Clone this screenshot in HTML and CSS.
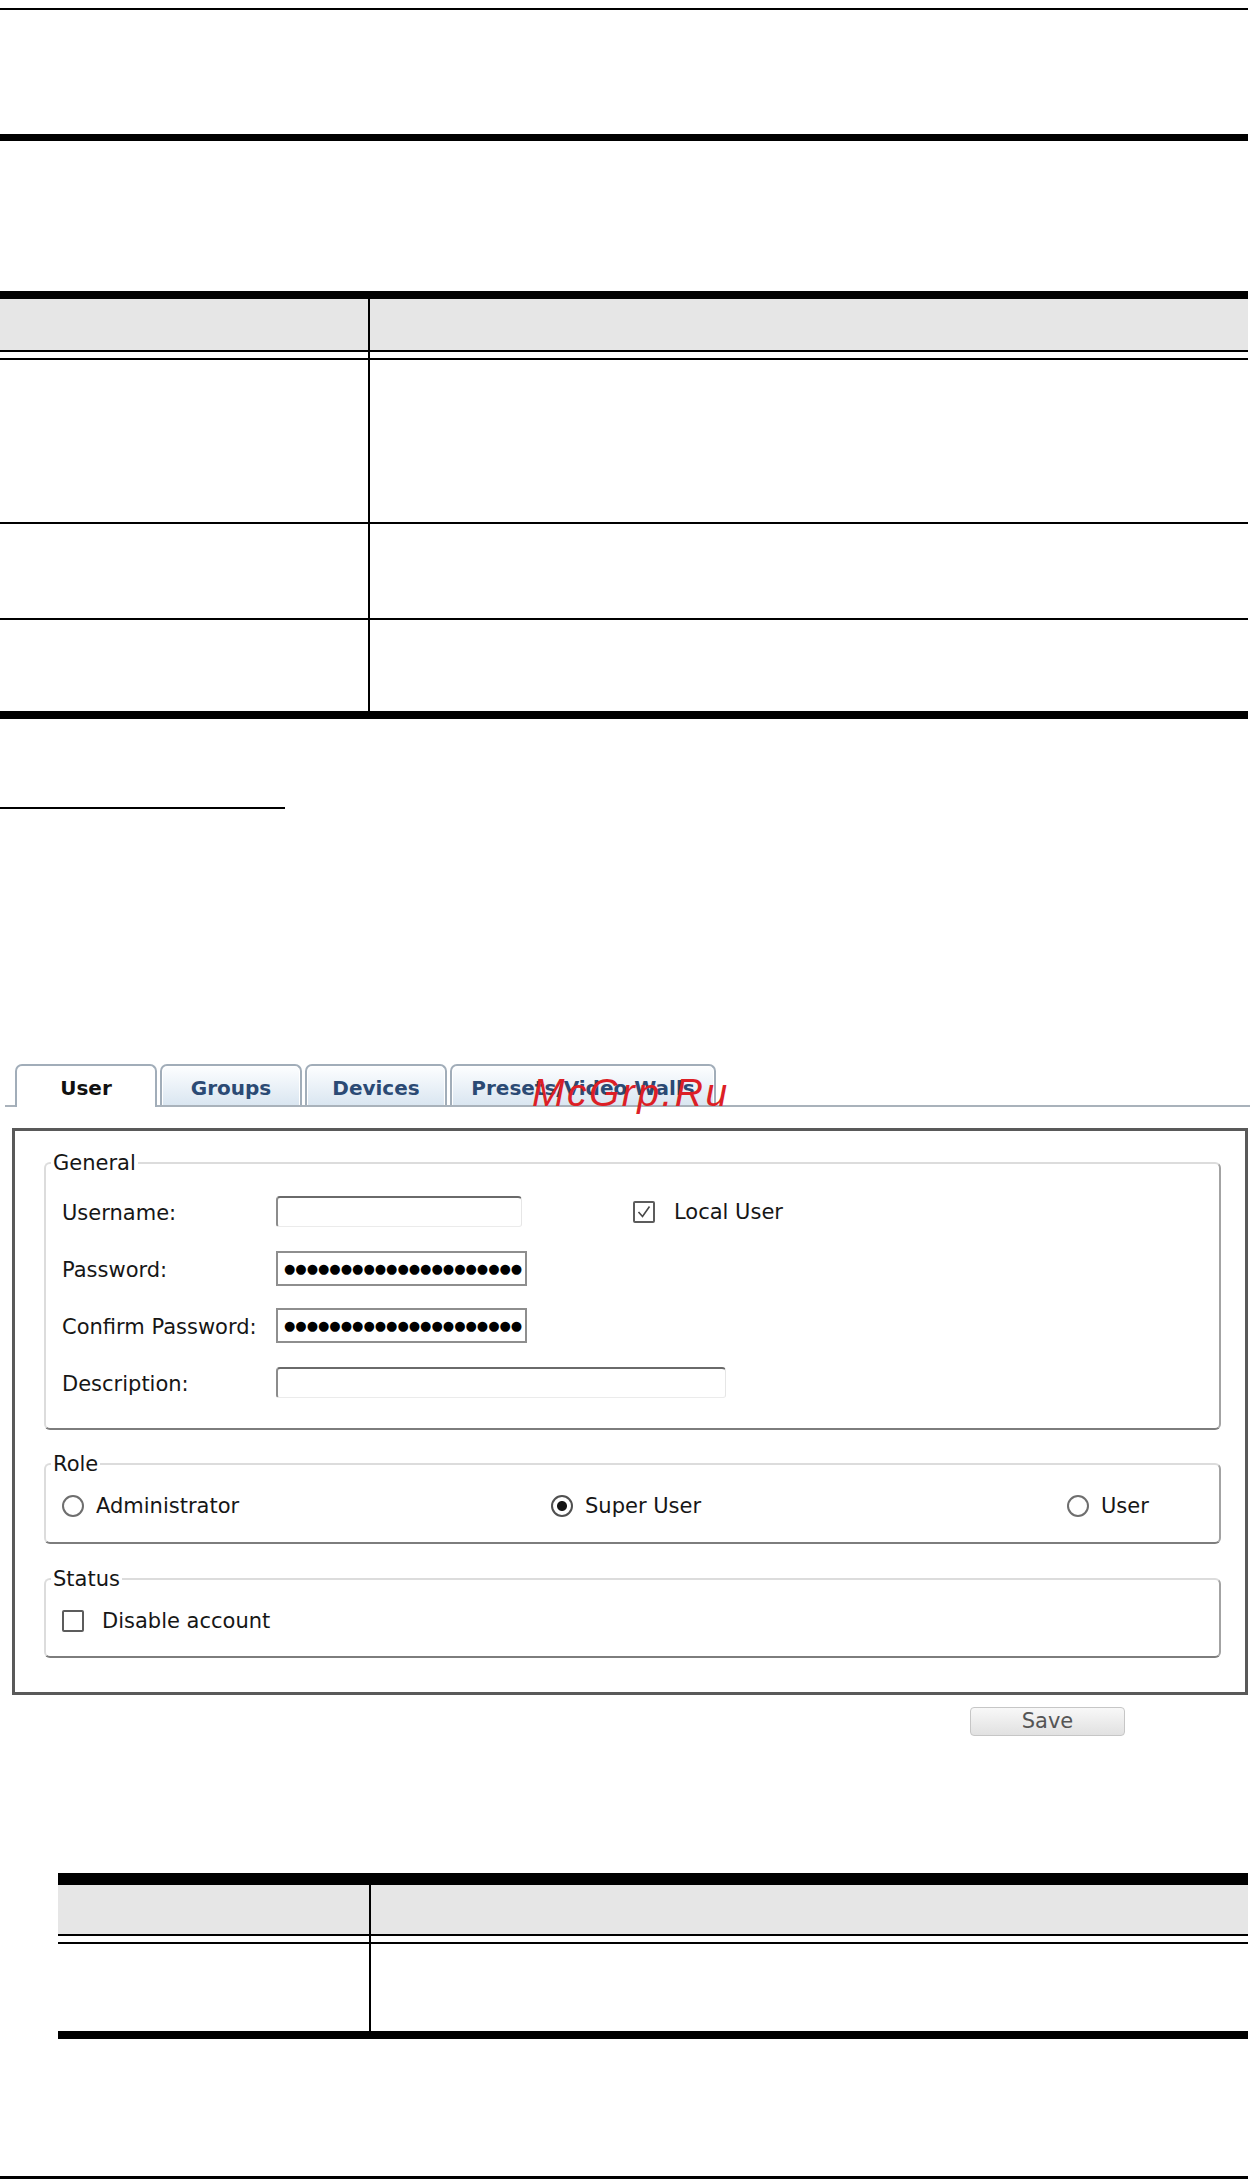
FILE: index.html
```html
<!DOCTYPE html>
<html lang="en">
<head>
  <meta charset="UTF-8">
  <title>User Accounts</title>
  <link rel="stylesheet" href="styles.css">
</head>
<body>
  <div class="page">
    <div class="rule-top"></div>
    <div class="rule-chapter"></div>

    <div class="spec spec-main">
      <div class="spec-row spec-head"><div></div><div></div></div>
      <div class="spec-row spec-split"><div></div><div></div></div>
      <div class="spec-row row-tall spec-line"><div></div><div></div></div>
      <div class="spec-row row-mid spec-line"><div></div><div></div></div>
      <div class="spec-row row-low"><div></div><div></div></div>
    </div>

    <div class="section-rule"></div>

    <div class="console">
      <div class="tabbar">
        <div class="tab active">User</div>
        <div class="tab">Groups</div>
        <div class="tab">Devices</div>
        <div class="tab tab-wide">Presets/Video Walls</div>
        <span class="watermark">McGrp.Ru</span>
      </div>

      <div class="panel">
        <fieldset class="group group-general">
          <legend>General</legend>
          <div class="fields">
            <label class="field-label">Username:</label>
            <div class="input-plain"></div>
            <label class="check-item local-user">
              <span class="check">
                <svg width="18" height="18" viewBox="0 0 18 18"><path d="M3.5 9 L7.5 13.5 L14.5 3.5" fill="none" stroke="#474747" stroke-width="1.6"/></svg>
              </span>
              <span>Local User</span>
            </label>

            <label class="field-label">Password:</label>
            <div class="input-pass"><span class="dots">●●●●●●●●●●●●●●●●●●●●●</span></div>
            <div></div>

            <label class="field-label">Confirm Password:</label>
            <div class="input-pass"><span class="dots">●●●●●●●●●●●●●●●●●●●●●</span></div>
            <div></div>

            <label class="field-label">Description:</label>
            <div class="input-plain input-wide"></div>
          </div>
        </fieldset>

        <fieldset class="group group-role">
          <legend>Role</legend>
          <div class="roles">
            <label class="radio-item"><span class="radio"></span><span>Administrator</span></label>
            <label class="radio-item"><span class="radio on"></span><span>Super User</span></label>
            <label class="radio-item"><span class="radio"></span><span>User</span></label>
          </div>
        </fieldset>

        <fieldset class="group group-status">
          <legend>Status</legend>
          <label class="check-item">
            <span class="check"></span>
            <span>Disable account</span>
          </label>
        </fieldset>
      </div>

      <div class="actions">
        <button class="save-button">Save</button>
      </div>
    </div>

    <div class="spec spec-small">
      <div class="spec-row spec-head"><div></div><div></div></div>
      <div class="spec-row spec-split"><div></div><div></div></div>
      <div class="spec-row row-single"><div></div><div></div></div>
    </div>

    <div class="rule-bottom"></div>
  </div>
</body>
</html>
```

FILE: styles.css
```css
:root {
  --ink: #161616;
  --head-bg: #e6e6e6;
  --tab-border: #a1adb9;
  --tab-text: #2b4a74;
}

body {
  margin: 0;
  background: #fff;
  font-family: "DejaVu Sans", sans-serif;
  color: var(--ink);
}

.page {
  width: 1248px;
}

.rule-top {
  margin-top: 8px;
  height: 2px;
  background: #000;
}

.rule-chapter {
  margin-top: 124px;
  height: 7px;
  background: #000;
}

/* spec tables (text blanked in the source) */
.spec {
  border-top: 8px solid #000;
  border-bottom: 8px solid #000;
}

.spec-main {
  margin-top: 150px;
}

.spec-row {
  display: grid;
  grid-template-columns: 370px 1fr;
}

.spec-row > div:first-child {
  border-right: 2px solid #000;
}

.spec-head {
  height: 51px;
  background: var(--head-bg);
  border-bottom: 2px solid #000;
}

.spec-split {
  height: 6px;
  border-bottom: 2px solid #000;
}

.spec-line {
  border-bottom: 2px solid #000;
}

.row-tall { height: 162px; }
.row-mid { height: 94px; }
.row-low { height: 91px; }
.row-single { height: 87px; }

.spec-small {
  margin-top: 137px;
  margin-left: 58px;
  border-top-width: 12px;
}

.spec-small .spec-row {
  grid-template-columns: 313px 1fr;
}

.spec-small .spec-head {
  height: 49px;
}

.section-rule {
  margin-top: 88px;
  width: 285px;
  height: 2px;
  background: #000;
}

.rule-bottom {
  margin-top: 137px;
  height: 3px;
  background: #000;
}

/* embedded screenshot */
.console {
  margin-top: 255px;
  margin-left: 5px;
  width: 1245px;
}

.tabbar {
  position: relative;
  display: flex;
  align-items: flex-end;
  gap: 3px;
  height: 41px;
  padding-left: 10px;
  border-bottom: 2px solid #a9b2bb;
}

.tab {
  box-sizing: border-box;
  width: 142px;
  height: 41px;
  padding-top: 4px;
  display: flex;
  align-items: center;
  justify-content: center;
  border: 2px solid var(--tab-border);
  border-bottom: none;
  border-radius: 7px 7px 0 0;
  background: linear-gradient(#fdfeff, #dae6f1);
  box-shadow: inset 1px 1px 0 #fff, inset -1px 0 0 #fff;
  color: var(--tab-text);
  font-size: 20px;
  font-weight: bold;
  white-space: nowrap;
}

.tab.active {
  height: 43px;
  margin-bottom: -2px;
  padding-bottom: 2px;
  background: #fff;
  color: #111;
}

.tab-wide {
  width: 266px;
}

.watermark {
  position: absolute;
  left: 527px;
  top: 9px;
  font-family: "Liberation Sans", Arial, sans-serif;
  font-style: italic;
  font-size: 39px;
  line-height: 39px;
  letter-spacing: 2.5px;
  color: #dc1f26;
}

.panel {
  box-sizing: border-box;
  width: 1236px;
  margin: 21px 0 0 7px;
  padding: 20px 24px 34px 29px;
  border: 3px solid #595959;
}

.group {
  margin: 0;
  min-width: 0;
  padding: 0 0 0 16px;
  border: 2px solid #dcdcdc;
  border-right-color: #a3a3a3;
  border-bottom-color: #7d7d7d;
  border-radius: 6px;
}

.group legend {
  margin-left: -11px;
  padding: 0 2px;
  font-size: 21px;
  line-height: 24px;
}

.group-general {
  padding-top: 19px;
  padding-bottom: 28px;
}

.group-role {
  margin-top: 22px;
  padding-top: 18px;
  padding-bottom: 24px;
}

.group-status {
  margin-top: 23px;
  padding-top: 18px;
  padding-bottom: 23px;
}

.fields {
  display: grid;
  grid-template-columns: 214px 357px 1fr;
  grid-auto-rows: 35px;
  row-gap: 22px;
  align-items: center;
  font-size: 21px;
}

.field-label {
  padding-top: 3px;
  white-space: nowrap;
}

.input-plain {
  box-sizing: border-box;
  width: 246px;
  height: 31px;
  border-top: 2px solid #6a6a6a;
  border-left: 2px solid #8c8c8c;
  border-right: 1px solid #e6e6e6;
  border-bottom: 1px solid #ebebeb;
  border-radius: 4px 4px 3px 3px;
  background: #fff;
}

.input-wide {
  grid-column: 2 / span 2;
  width: 450px;
}

.input-pass {
  box-sizing: border-box;
  width: 251px;
  height: 35px;
  border: 2px solid #8e8e8e;
  padding-left: 6px;
  display: flex;
  align-items: center;
  overflow: hidden;
}

.dots {
  font-size: 13px;
  line-height: 1;
  letter-spacing: 0;
  color: #000;
  white-space: nowrap;
}

.check-item,
.radio-item {
  display: flex;
  align-items: center;
  gap: 18px;
  font-size: 21px;
  line-height: 24px;
  white-space: nowrap;
}

.local-user {
  gap: 19px;
}

.check {
  box-sizing: border-box;
  width: 22px;
  height: 22px;
  border: 2px solid #5c5c5c;
  border-radius: 2px;
  background: #fff;
  display: flex;
  align-items: center;
  justify-content: center;
}

.roles {
  display: grid;
  grid-template-columns: 489px 516px auto;
}

.radio-item {
  gap: 12px;
}

.radio {
  box-sizing: border-box;
  width: 22px;
  height: 22px;
  border: 2px solid #6e6e6e;
  border-radius: 50%;
  background: #fff;
}

.radio.on {
  border-color: #505050;
  background: radial-gradient(circle, #151515 0 4.5px, #fff 5.5px);
}

.actions {
  margin-top: 12px;
  padding-left: 965px;
}

.save-button {
  box-sizing: border-box;
  width: 155px;
  height: 29px;
  padding: 0;
  border: 1px solid #c6c6c6;
  border-radius: 4px;
  background: linear-gradient(#f8f8f8, #e1e1e1);
  color: #555;
  font-family: "DejaVu Sans", sans-serif;
  font-size: 21px;
  line-height: 27px;
}
```
